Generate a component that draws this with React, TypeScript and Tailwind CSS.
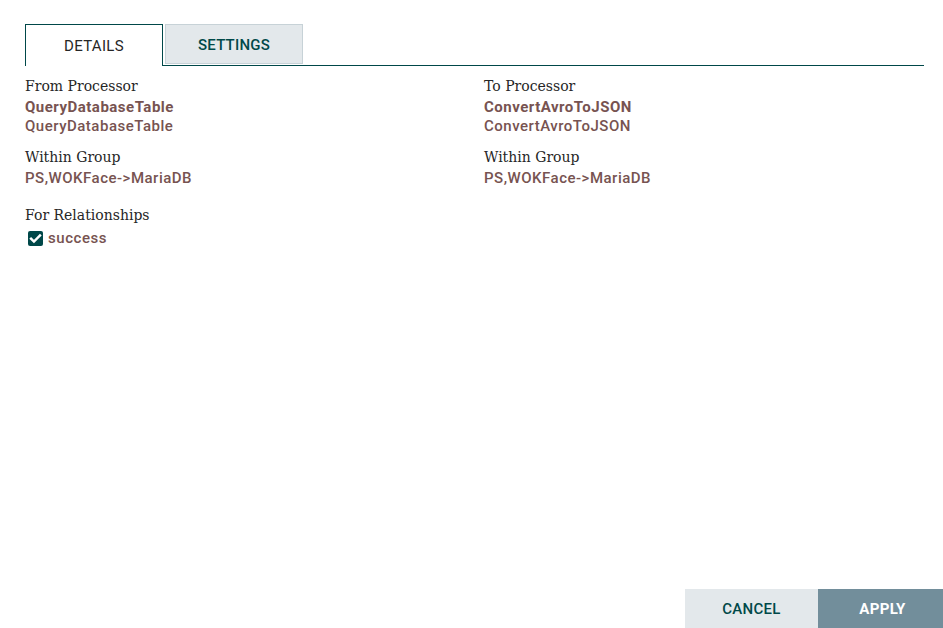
import { FC } from "react";

const slab = "font-['Roboto_Slab','DejaVu_Serif',serif]";
const roboto = "font-['Roboto','Liberation_Sans',sans-serif]";

interface FieldProps {
  label: string;
  children: React.ReactNode;
}

const Field: FC<FieldProps> = ({ label, children }) => {
  return (
    <div className="flex flex-col">
      <div className={`${slab} text-[14px] leading-[20px] text-[#262626]`}>{label}</div>
      <div className={`${roboto} mt-[2px] text-[15px] font-medium leading-[19px] tracking-[0.5px] text-[#775351]`}>{children}</div>
    </div>
  );
};

const Check: FC = () => (
  <span className="flex h-[15px] w-[15px] items-center justify-center rounded-[2px] bg-[#004849]">
    <svg viewBox="0 0 16 16" className="h-[13px] w-[13px]" fill="none">
      <path d="M2.5 8.2l3.6 3.6L13.5 4.2" stroke="white" strokeWidth="3" strokeLinecap="square" />
    </svg>
  </span>
);

export default function App() {
  return (
    <div className={`${roboto} relative h-[628px] w-[943px] overflow-hidden bg-white`}>
      <div className="flex h-full flex-col pl-[25px] pr-[19px] pt-[24px]">
        <div className="flex items-end">
          <div className="flex h-[42px] w-[138px] items-center justify-center border-x border-t border-[#004849] bg-white pt-[1px] text-[15px] tracking-[0.3px] text-[#262626]">
            DETAILS
          </div>
          <div className="flex h-[42px] flex-1 items-end border-b border-[#004849] pl-[2px]">
            <div className="mb-[1px] flex h-[40px] w-[138px] items-center justify-center border border-[#c7d2d7] bg-[#e3e8eb] pt-[2px] text-[15px] font-medium tracking-[0.2px] text-[#004849]">
              SETTINGS
            </div>
          </div>
        </div>

        <div className="mt-[10px] grid grid-cols-[459px_1fr] gap-y-[11px]">
          <Field label="From Processor">
            <div className="font-bold">QueryDatabaseTable</div>
            <div>QueryDatabaseTable</div>
          </Field>
          <Field label="To Processor">
            <div className="font-bold">ConvertAvroToJSON</div>
            <div>ConvertAvroToJSON</div>
          </Field>
          <Field label="Within Group">PS,WOKFace-&gt;MariaDB</Field>
          <Field label="Within Group">PS,WOKFace-&gt;MariaDB</Field>
        </div>

        <div className="mt-[17px] flex flex-col">
          <div className={`${slab} text-[14px] leading-[20px] text-[#262626]`}>For Relationships</div>
          <div className="mt-[3px] flex items-center gap-[5px] pl-[3px]">
            <Check />
            <span className="text-[15px] font-medium leading-[20px] tracking-[0.55px] text-[#775351]">success</span>
          </div>
        </div>
      </div>

      <div className="absolute bottom-0 right-0 flex">
        <button className="flex h-[39px] w-[133px] items-center justify-center bg-[#e3e8eb] pt-[1px] text-[15px] font-medium tracking-[0.3px] text-[#004849]">
          CANCEL
        </button>
        <button className="flex h-[39px] w-[125px] items-center justify-center bg-[#728e9b] pl-[4px] pt-[1px] text-[15px] font-bold tracking-[0.3px] text-white">
          APPLY
        </button>
      </div>
    </div>
  );
}
